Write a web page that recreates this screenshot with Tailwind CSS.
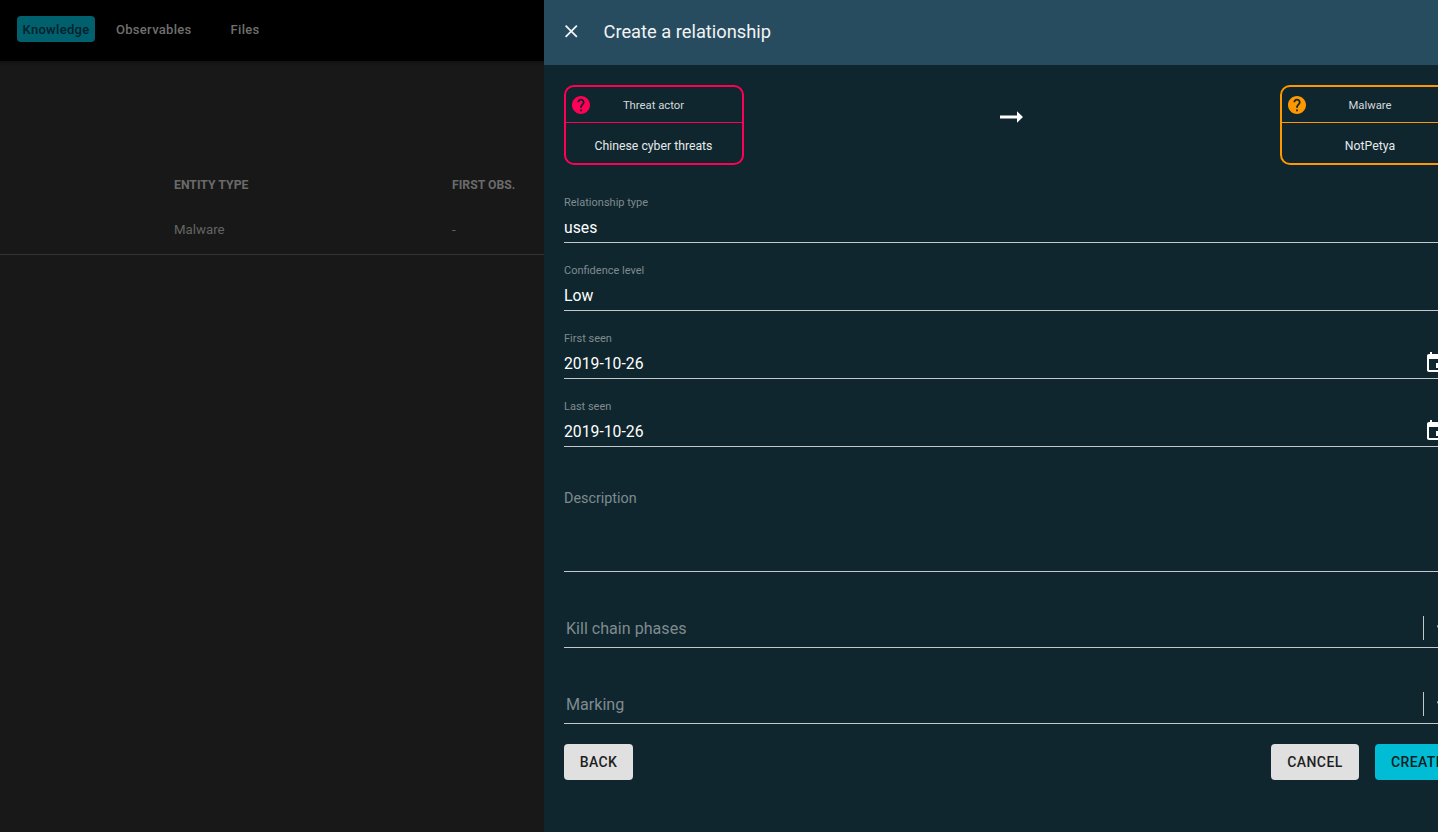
<!DOCTYPE html>
<html lang="en">
<head>
    <meta charset="UTF-8">
    <title>Create a relationship</title>
    <script src="https://cdn.jsdelivr.net/npm/@tailwindcss/browser@4"></script>
</head>
<body class="h-[832px] w-[1438px] overflow-hidden bg-[#181818] font-['Roboto',sans-serif]">
    <div class="flex h-[832px] w-[1480px]">
        <!-- Dimmed page behind the drawer -->
        <div class="w-[544px] shrink-0">
            <div class="flex h-[61px] items-start bg-black pl-[17px] pt-4 text-[13px] font-medium tracking-[0.3px] text-[#6f6f6f] shadow-[0_1px_4px_rgba(0,0,0,0.4)]">
                <span class="flex h-[26px] w-[78px] items-center justify-center rounded bg-[#00606e] pt-px text-[#03222a]">Knowledge</span>
                <span class="ml-[21px] flex h-[26px] items-center pt-px">Observables</span>
                <span class="ml-[39px] flex h-[26px] items-center pt-px">Files</span>
            </div>
            <div class="flex pl-[174px] pt-[115px] text-[12.25px] font-bold text-[#6a6a6a]">
                <span class="w-[278px]">ENTITY TYPE</span>
                <span>FIRST OBS.</span>
            </div>
            <div class="flex h-[61px] border-b border-[#333333] pl-[174px] pt-[26px] text-[13.25px] text-[#646464]">
                <span class="w-[278px]">Malware</span>
                <span>-</span>
            </div>
        </div>

        <!-- Drawer -->
        <div class="w-[936px] shrink-0 bg-[#0f262e] text-white">
            <div class="flex h-[65px] items-center bg-[#274b5f] pl-[21px]">
                <svg class="mb-[2px] size-[12.5px]" viewBox="5 5 14 14" fill="#f2f4f5"><path d="M19 6.41 17.59 5 12 10.59 6.41 5 5 6.41 10.59 12 5 17.59 6.41 19 12 13.41 17.59 19 19 17.59 13.41 12z"/></svg>
                <h2 class="ml-[26px] text-[18.3px] leading-none text-[#f2f4f5]">Create a relationship</h2>
            </div>
            <div class="w-[936px] px-5 pt-5">
                <div class="flex items-start justify-between">
                    <div class="h-20 w-[180px] rounded-[10px] border-2 border-[#ff0056]">
                        <div class="relative flex h-9 items-center justify-center border-b border-[#ff0056] pr-px pt-[3px] text-[11.3px] text-[#d5d9db]">
                            <svg class="absolute left-[6px] top-[9px] size-[18px]" viewBox="2 2 20 20" fill="#ff0056"><path d="M12 2C6.48 2 2 6.48 2 12s4.48 10 10 10 10-4.48 10-10S17.52 2 12 2zm1 17h-2v-2h2v2zm2.07-7.75-.9.92C13.45 12.9 13 13.5 13 15h-2v-.5c0-1.1.45-2.1 1.17-2.83l1.24-1.26c.37-.36.59-.86.59-1.41 0-1.1-.9-2-2-2s-2 .9-2 2H8c0-2.21 1.79-4 4-4s4 1.79 4 4c0 .88-.36 1.68-.93 2.25z"/></svg>
                            Threat actor
                        </div>
                        <div class="flex h-10 items-center justify-center pr-px pt-[7px] text-[12.25px] text-[#e6e9ea]">Chinese cyber threats</div>
                    </div>
                    <svg class="mt-5 size-6" viewBox="0 0 24 24" fill="#ffffff"><path d="M0 10.6h17V6.2l6 5.8-6 5.8v-4.4H0z"/></svg>
                    <div class="h-20 w-[180px] rounded-[10px] border-2 border-[#ff9800]">
                        <div class="relative flex h-9 items-center justify-center border-b border-[#ff9800] pt-[3px] text-[11.3px] text-[#d5d9db]">
                            <svg class="absolute left-[6px] top-[9px] size-[18px]" viewBox="2 2 20 20" fill="#ff9800"><path d="M12 2C6.48 2 2 6.48 2 12s4.48 10 10 10 10-4.48 10-10S17.52 2 12 2zm1 17h-2v-2h2v2zm2.07-7.75-.9.92C13.45 12.9 13 13.5 13 15h-2v-.5c0-1.1.45-2.1 1.17-2.83l1.24-1.26c.37-.36.59-.86.59-1.41 0-1.1-.9-2-2-2s-2 .9-2 2H8c0-2.21 1.79-4 4-4s4 1.79 4 4c0 .88-.36 1.68-.93 2.25z"/></svg>
                            Malware
                        </div>
                        <div class="flex h-10 items-center justify-center pt-[7px] text-[12.25px] text-[#e6e9ea]">NotPetya</div>
                    </div>
                </div>

                <!-- Text fields -->
                <div class="mt-[30px] h-[48px] border-b border-[#c3c9cb] pt-px">
                    <div class="text-[11px] leading-[14px] text-[#7f8b8f]">Relationship type</div>
                    <div class="mt-[6px] text-[15.75px] leading-[24px]">uses</div>
                </div>
                <div class="mt-5 h-[48px] border-b border-[#c3c9cb] pt-px">
                    <div class="text-[11px] leading-[14px] text-[#7f8b8f]">Confidence level</div>
                    <div class="mt-[6px] text-[15.75px] leading-[24px]">Low</div>
                </div>
                <div class="mt-5 h-[48px] border-b border-[#c3c9cb] pt-px">
                    <div class="text-[11px] leading-[14px] text-[#7f8b8f]">First seen</div>
                    <div class="mt-[6px] flex items-center justify-between text-[15.75px] leading-[24px]">
                        2019-10-26
                        <svg class="mr-3 mt-[-2px] size-6" viewBox="0 0 24 24" fill="#ffffff"><path d="M17 12h-5v5h5v-5zM16 1v2H8V1H6v2H5c-1.11 0-1.99.9-1.99 2L3 19c0 1.1.89 2 2 2h14c1.1 0 2-.9 2-2V5c0-1.1-.9-2-2-2h-1V1h-2zm3 18H5V8h14v11z"/></svg>
                    </div>
                </div>
                <div class="mt-5 h-[48px] border-b border-[#c3c9cb] pt-px">
                    <div class="text-[11px] leading-[14px] text-[#7f8b8f]">Last seen</div>
                    <div class="mt-[6px] flex items-center justify-between text-[15.75px] leading-[24px]">
                        2019-10-26
                        <svg class="mr-3 mt-[-2px] size-6" viewBox="0 0 24 24" fill="#ffffff"><path d="M17 12h-5v5h5v-5zM16 1v2H8V1H6v2H5c-1.11 0-1.99.9-1.99 2L3 19c0 1.1.89 2 2 2h14c1.1 0 2-.9 2-2V5c0-1.1-.9-2-2-2h-1V1h-2zm3 18H5V8h14v11z"/></svg>
                    </div>
                </div>
                <div class="mt-5 h-[105px] border-b border-[#c3c9cb] pt-[22px] text-[14.35px] leading-[20px] text-[#7f8b8f]">Description</div>

                <!-- Selects -->
                <div class="mt-[37px] flex h-[39px] items-center justify-between border-b border-[#c3c9cb] pl-[2px]">
                    <span class="pt-[2px] text-[16.1px] text-[#7f8b8f]">Kill chain phases</span>
                    <span class="flex items-center">
                        <span class="h-6 w-px bg-[#c3c9cb]"></span>
                        <svg class="mx-2 size-5" viewBox="0 0 20 20" fill="#cccccc"><path d="M4.516 7.548c.436-.446 1.043-.481 1.576 0L10 11.295l3.908-3.747c.533-.481 1.141-.446 1.574 0 .436.445.408 1.197 0 1.615-.406.418-4.695 4.502-4.695 4.502a1.095 1.095 0 0 1-1.576 0S5.923 9.581 5.516 9.163s-.436-1.17 0-1.615z"/></svg>
                    </span>
                </div>
                <div class="mt-[37px] flex h-[39px] items-center justify-between border-b border-[#c3c9cb] pl-[2px]">
                    <span class="pt-[2px] text-[16.1px] text-[#7f8b8f]">Marking</span>
                    <span class="flex items-center">
                        <span class="h-6 w-px bg-[#c3c9cb]"></span>
                        <svg class="mx-2 size-5" viewBox="0 0 20 20" fill="#cccccc"><path d="M4.516 7.548c.436-.446 1.043-.481 1.576 0L10 11.295l3.908-3.747c.533-.481 1.141-.446 1.574 0 .436.445.408 1.197 0 1.615-.406.418-4.695 4.502-4.695 4.502a1.095 1.095 0 0 1-1.576 0S5.923 9.581 5.516 9.163s-.436-1.17 0-1.615z"/></svg>
                    </span>
                </div>

                <!-- Actions -->
                <div class="mt-5 flex text-[14px] font-medium tracking-[0.4px] text-[#1f1f1f]">
                    <button class="h-9 w-[69px] rounded bg-[#e0e0e0]">BACK</button>
                    <button class="ml-auto h-9 w-[88px] rounded bg-[#e0e0e0]">CANCEL</button>
                    <button class="ml-4 h-9 w-[85px] rounded bg-[#00bcd4] text-[#0b1d24]">CREATE</button>
                </div>
            </div>
        </div>
    </div>
</body>
</html>
